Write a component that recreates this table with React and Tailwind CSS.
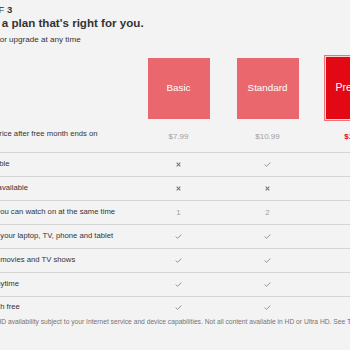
import React from "react";

const cols = "grid grid-cols-[178px_89px_89px_89px]";

function Check({ red }) {
  return (
    <svg width="7" height="5" viewBox="0 0 7 5" className="block">
      <path d="M0.6 2.6 L2.5 4.3 L6.4 0.6" fill="none" stroke={red ? "#e50914" : "#949494"} strokeWidth="1" />
    </svg>
  );
}

function Cross({ red }) {
  return (
    <svg width="5" height="5" viewBox="0 0 5 5" className="block">
      <path d="M0.7 0.7 L4.3 4.3 M4.3 0.7 L0.7 4.3" fill="none" stroke={red ? "#e50914" : "#7a7a7a"} strokeWidth="1.2" />
    </svg>
  );
}

function Cell({ v, red }) {
  let inner;
  if (v === "y") inner = <Check red={red} />;
  else if (v === "n") inner = <Cross red={red} />;
  else inner = <span className={red ? "text-[#e50914] font-bold" : "text-[#a0a0a0]"}>{v}</span>;
  return <div className="flex items-center justify-center text-[8px]">{inner}</div>;
}

const rows = [
  ["HD available", "n", "y", "y"],
  ["Ultra HD available", "n", "n", "y"],
  ["Screens you can watch on at the same time", "1", "2", "4"],
  ["Watch on your laptop, TV, phone and tablet", "y", "y", "y"],
  ["Unlimited movies and TV shows", "y", "y", "y"],
  ["Cancel anytime", "y", "y", "y"],
  ["First month free", "y", "y", "y"],
];

export default function App() {
  return (
    <div className="w-[350px] h-[350px] overflow-hidden bg-[#f3f3f3] font-['Liberation_Sans',Arial,sans-serif] text-[#333]">
      <div className="ml-[-44px] w-[620px]">
        <div className="pt-[4px] text-[9.5px] leading-[12px] whitespace-nowrap">
          STEP <b>1</b> OF <b>3</b>
        </div>
        <div className="text-[11.6px] leading-[14px] font-bold whitespace-nowrap">
          Choose a plan that's right for you.
        </div>
        <div className="mt-[5px] text-[8.1px] leading-[10px] whitespace-nowrap">
          Downgrade or upgrade at any time
        </div>

        <div className={`${cols} mt-[10px] h-[66px] items-center`}>
          <div />
          <div className="flex justify-center">
            <div className="w-[62px] h-[61px] bg-[#e9676d] flex items-center justify-center text-white text-[9.8px]">
              Basic
            </div>
          </div>
          <div className="flex justify-center">
            <div className="w-[62px] h-[61px] bg-[#e9676d] flex items-center justify-center text-white text-[9.8px]">
              Standard
            </div>
          </div>
          <div className="flex justify-center">
            <div className="w-[66px] h-[66px] border border-[#ec737a] p-px bg-[#f7d5d7]">
              <div className="h-full bg-[#e20914] flex items-center justify-center text-white text-[10.5px]">
                Premium
              </div>
            </div>
          </div>
        </div>

        <div className={`${cols} h-[32px] border-b border-[#d4d4d4]`}>
          <div className="pl-[10px] pt-[8px] text-[7.7px] leading-[10px] whitespace-nowrap">
            Monthly price after free month ends on
          </div>
          <div className="flex items-center justify-center text-[8px] text-[#a0a0a0]">$7.99</div>
          <div className="flex items-center justify-center text-[8px] text-[#a0a0a0]">$10.99</div>
          <div className="flex items-center justify-center text-[8px] font-bold text-[#e50914]">$13.99</div>
        </div>

        {rows.map((r, i) => (
          <div
            key={i}
            className={`${cols} ${i === rows.length - 1 ? "h-[20px]" : "h-[24px] border-b border-[#d4d4d4]"} items-center`}
          >
            <div className="pl-[10px] text-[7.7px] leading-[10px] whitespace-nowrap pb-px">{r[0]}</div>
            <Cell v={r[1]} />
            <Cell v={r[2]} />
            <Cell v={r[3]} red />
          </div>
        ))}

        <div className="text-[6.7px] leading-[10px] text-[#737373] whitespace-nowrap">
          HD and Ultra HD availability subject to your Internet service and device capabilities. Not all content available in HD or Ultra HD. See{" "}
          <span className="text-[#0071eb]">Terms of Use</span> for more details.
        </div>
      </div>
    </div>
  );
}
